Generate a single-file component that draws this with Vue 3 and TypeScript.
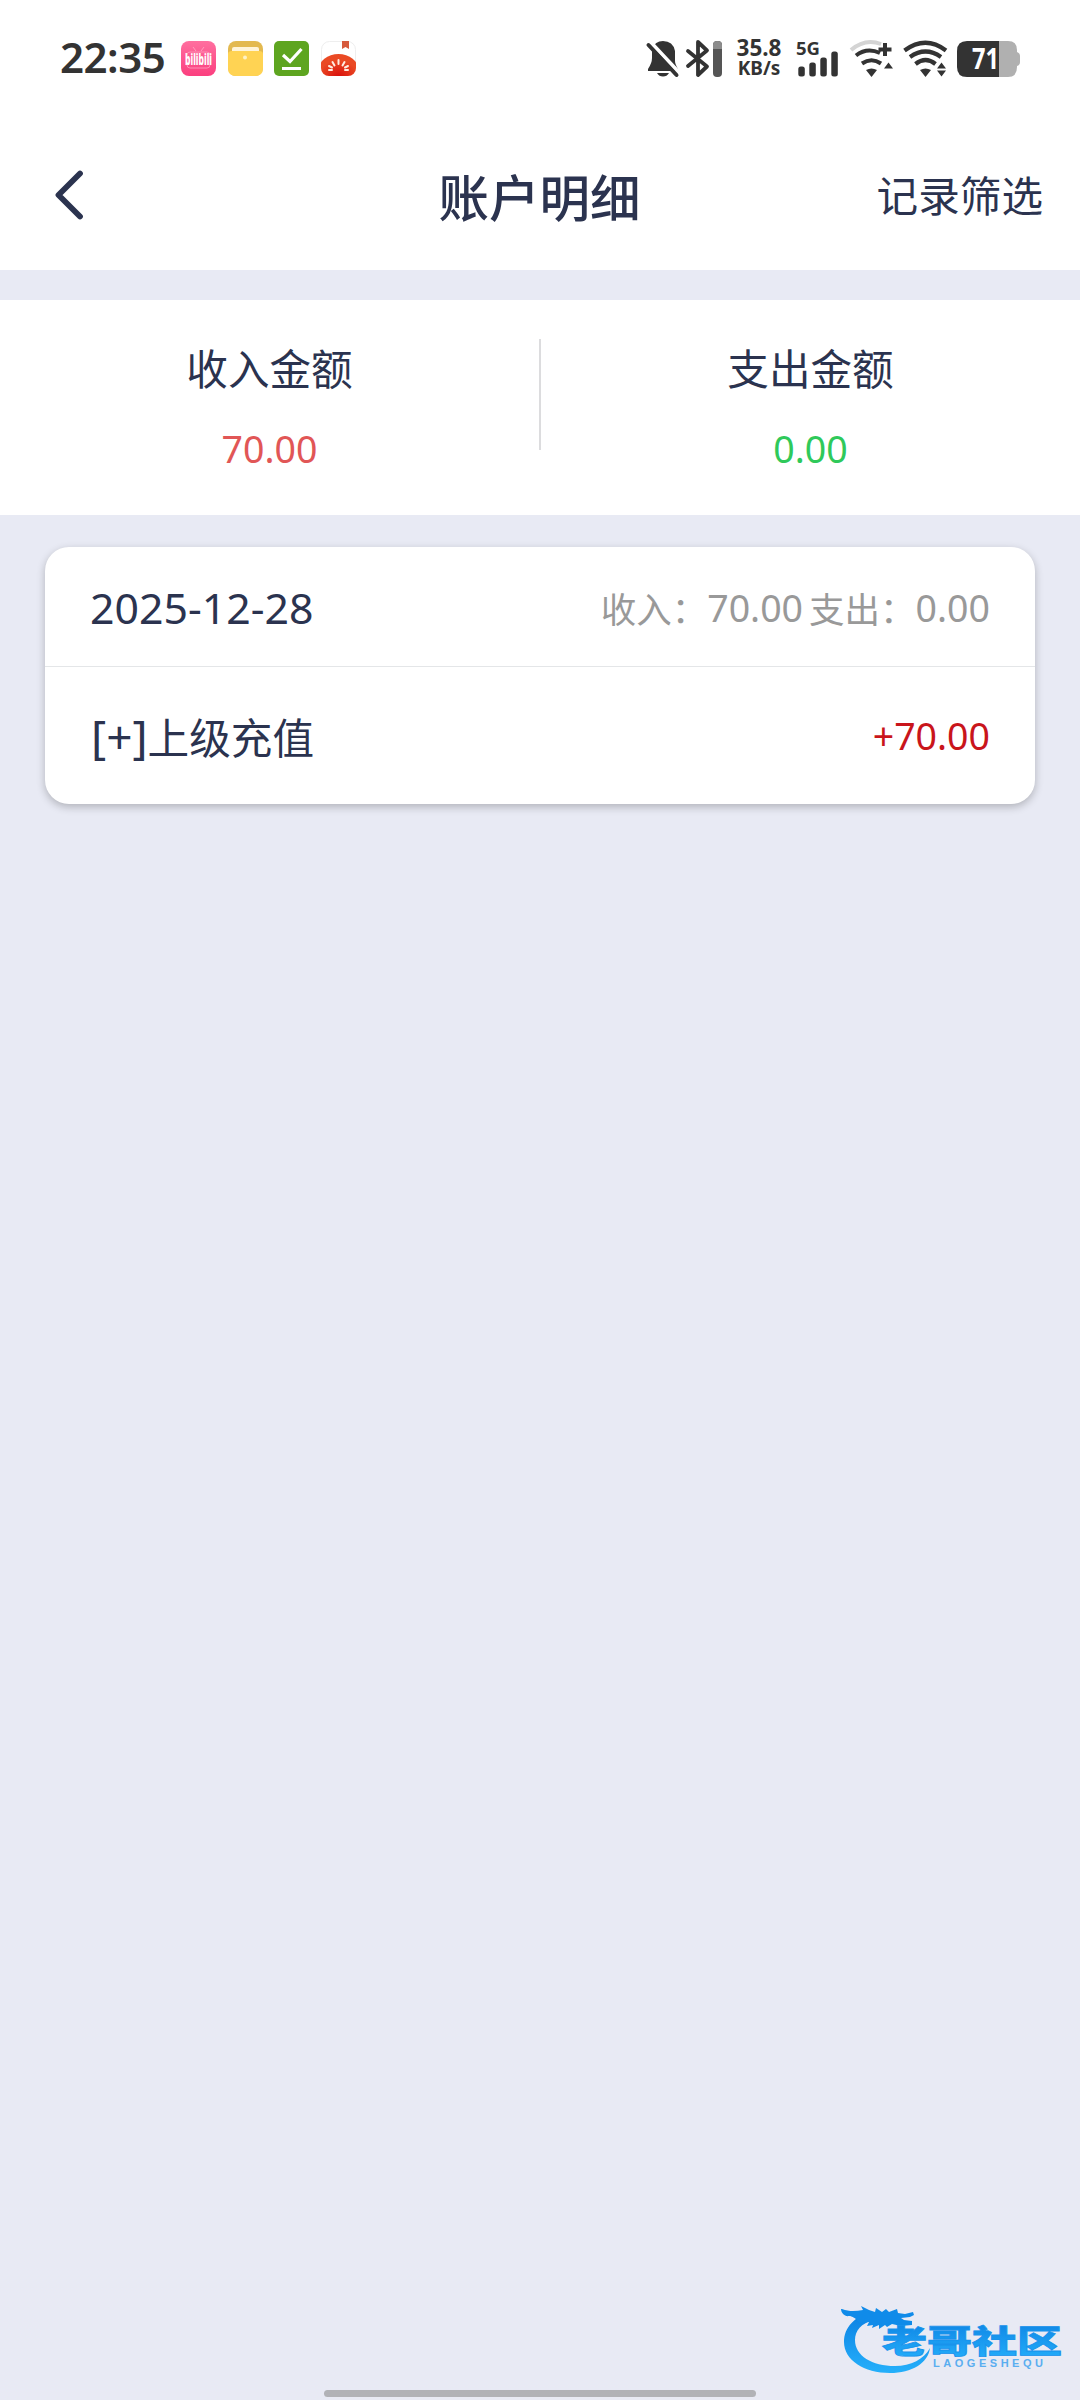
<template>
  <div class="page">
    <div class="status-bar">
      <span class="time">22:35</span>
      <div class="app-icons">
        <svg class="app-icon" viewBox="0 0 35 35">
          <defs>
            <linearGradient id="pink" x1="0" y1="0" x2="0" y2="1">
              <stop offset="0" stop-color="#ff6f9f" />
              <stop offset="1" stop-color="#fb3f7f" />
            </linearGradient>
          </defs>
          <rect width="35" height="35" rx="8" fill="url(#pink)" />
          <rect x="6" y="11" width="23" height="16" rx="3" fill="none" stroke="#ff8fb4" />
          <path d="M12 6l3 4M23 6l-3 4" stroke="#ff9dbd" fill="none" />
          <text x="4" y="23.500" class="bili" textLength="27" lengthAdjust="spacingAndGlyphs">bilibili</text>
        </svg>
        <svg class="app-icon" viewBox="0 0 35 35">
          <rect width="35" height="35" rx="8" fill="#e3b94f" />
          <path d="M4 10V8q0-2 2-2h23q2 0 2 2v2z" fill="#fff4d8" />
          <path d="M0 13q0-3 4-3h27q4 0 4 3v14q0 8-8 8H8q-8 0-8-8z" fill="#ffd353" />
          <circle cx="17" cy="16.500" r="2" fill="#fff2c4" />
        </svg>
        <svg class="app-icon" viewBox="0 0 35 35">
          <rect width="35" height="35" rx="5" fill="#5ea520" />
          <path d="M9 14l7 6.500L27.500 8" fill="none" stroke="#fff" stroke-width="3.200" />
          <path d="M8 27.500h19" stroke="#fff" stroke-width="3" />
        </svg>
        <svg class="app-icon" viewBox="0 0 35 35">
          <defs>
            <clipPath id="tomato"><rect width="35" height="35" rx="8" /></clipPath>
            <radialGradient id="red" cx=".5" cy=".7" r=".5">
              <stop offset="0" stop-color="#d90f0b" />
              <stop offset="1" stop-color="#ea4a24" />
            </radialGradient>
          </defs>
          <rect x=".5" y=".5" width="34" height="34" rx="8" fill="#fff" stroke="#eee" />
          <path d="M21 0h7v8l-3.500-2-3.500 2z" fill="#d65a3c" />
          <g clip-path="url(#tomato)">
            <ellipse cx="17.500" cy="29" rx="20" ry="16" fill="url(#red)" />
          </g>
          <path
            d="M17.500 19v4M11.500 21l2 3.500M23.500 21l-2 3.500M8 25l3 1.500M27 25l-3 1.500M8 29h3M24 29h3"
            stroke="#ffece0"
            stroke-width="2"
            stroke-linecap="round"
          />
        </svg>
      </div>

      <div class="indicators">
        <!-- 静音 -->
        <svg class="bell" width="32" height="37" viewBox="0 0 32 37">
          <path d="M5 9Q8 1 16 1q10 0 12 10v10q0 3 3 8v2H1v-2q4-6 4-11z" fill="#333" />
          <path d="M10 33h12q-2 3.500-6 3.500T10 33z" fill="#333" />
          <path d="M3 1.500l29 31" stroke="#fff" stroke-width="4" />
          <path d="M1.500 5l28 30" stroke="#333" stroke-width="4" stroke-linecap="round" />
        </svg>
        <!-- 蓝牙 -->
        <svg class="bluetooth" width="36" height="37" viewBox="0 0 36 37">
          <path
            d="M2 11l19 15.500-9 8.500V2l9 8.500L2 26"
            fill="none"
            stroke="#333"
            stroke-width="3.800"
            stroke-linecap="round"
            stroke-linejoin="round"
          />
          <rect x="27" y="1" width="9" height="36" rx="4" fill="#555" />
          <path d="M27 9V5q0-4 4.500-4T36 5v4z" fill="#8c8c8c" />
        </svg>
        <div class="net-speed">
          <span class="speed-value">35.8</span>
          <span class="speed-unit">KB/s</span>
        </div>
        <svg class="signal" width="42" height="37" viewBox="0 0 42 37">
          <text x="0" y="15" class="signal-text" textLength="24" lengthAdjust="spacingAndGlyphs">5G</text>
          <rect
            v-for="(h, i) in signalBars"
            :key="i"
            :x="2.3 + i * 11"
            :y="36.5 - h"
            width="6.500"
            :height="h"
            rx="2.500"
            fill="#333"
          />
        </svg>
        <svg class="wifi-plus" width="43" height="37" viewBox="0 0 43 37">
          <g fill="none" stroke-width="4">
            <path d="M1 10Q15 -2 31 4" stroke="#d4d4d4" />
            <path d="M6 15.500Q17 7 30 13" stroke="#333" />
            <path d="M12 23.500Q21.500 17 31 23.500" stroke="#333" />
          </g>
          <path d="M16 30q5.500-3 11 0l-5.500 7z" fill="#333" />
          <path d="M35 3v13M28.500 9.500h13" stroke="#333" stroke-width="4" />
          <path d="M34 28.500l4.500-6 4.500 6z" fill="#333" />
        </svg>
        <svg class="wifi" width="45" height="37" viewBox="0 0 45 37">
          <g fill="none" stroke="#333" stroke-width="4.200">
            <path d="M1.500 10.500Q22.500 -5 43 10.500" />
            <path d="M7 17Q22.500 6 38 17" />
            <path d="M12.500 24Q22.500 16 32.500 24" />
          </g>
          <path d="M17 30q5.500-3 11 0l-5.500 7zM34 28.500l4.500-6 4.500 6zM34 30.500l4.500 6 4.500-6z" fill="#333" />
        </svg>
        <svg class="battery" width="63" height="37" viewBox="0 0 63 37">
          <path d="M41 1h10q9 0 9 9v2q3 1 3 4v6q0 3-3 4v1q0 10-9 10H41z" fill="#b0b0b0" />
          <path d="M42 1H10Q0 1 0 11v16q0 10 10 10h32z" fill="#333" />
          <text x="15" y="28.500" class="battery-text" textLength="27" lengthAdjust="spacingAndGlyphs">71</text>
        </svg>
      </div>
    </div>

    <header class="nav-bar">
      <div class="back">
        <svg width="30" height="50" viewBox="0 0 30 50">
          <path
            d="M26 3.500L4.500 25L26 46.500"
            fill="none"
            stroke="#2b334f"
            stroke-width="5.800"
            stroke-linecap="round"
            stroke-linejoin="round"
          />
        </svg>
      </div>
      <h1 class="title">账户明细</h1>
      <span class="filter">记录筛选</span>
    </header>

    <section class="summary">
      <div class="summary-item">
        <div class="label">收入金额</div>
        <div class="amount income">{{ income }}</div>
      </div>
      <div class="divider"></div>
      <div class="summary-item">
        <div class="label">支出金额</div>
        <div class="amount expense">{{ expense }}</div>
      </div>
    </section>

    <main class="content">
      <div v-for="day in days" :key="day.date" class="card">
        <div class="card-header">
          <span class="date">{{ day.date }}</span>
          <span class="day-total">
            <span>收入：</span><span class="num">{{ day.income }}</span>
            <span class="second">支出：</span><span class="num">{{ day.expense }}</span>
          </span>
        </div>
        <div v-for="item in day.records" :key="item.name" class="record">
          <span class="record-name"><span class="sign">[+]</span>{{ item.name }}</span>
          <span class="record-amount">{{ item.amount }}</span>
        </div>
      </div>
    </main>

    <svg class="watermark" width="230" height="80" viewBox="0 0 230 80">
      <defs>
        <linearGradient id="blue" x1="0" y1="0" x2="0" y2="1">
          <stop offset="0" stop-color="#0c80e2" />
          <stop offset="1" stop-color="#25b0fb" />
        </linearGradient>
      </defs>
      <path
        d="M34 11C13 14 3 27 3 41c0 18 20 31 46 31 22 0 38-10 40-25-6 11-19 18-35 18-23 0-40-10-40-26 0-9 6-17 19-20z"
        fill="url(#blue)"
      />
      <path
        d="M1 8c8 3 14 2 21 1l-2-4 8 4 6 2 1-4 6 4 4-3 3 3 8-3 1 4 7 1 8-2 1 3-4 2-9 1 3 2 8 1v4l-11 1-9-2-5 3-2-2-6 4v-4l-7 3 1-3-6 1 2-4-10 1c-3-5-7-7-10-7-4 1-8-3-8-7z"
        fill="#108be9"
      />
      <text x="41" y="52" class="mark-name" textLength="180" lengthAdjust="spacingAndGlyphs">老哥社区</text>
      <text x="92" y="65.500" class="mark-sub" textLength="110">LAOGESHEQU</text>
    </svg>
    <div class="home-indicator"></div>
  </div>
</template>

<script setup lang="ts">
interface RecordItem {
  name: string
  amount: string
}

interface DayGroup {
  date: string
  income: string
  expense: string
  records: RecordItem[]
}

const income = '70.00'
const expense = '0.00'
const signalBars = [10, 14, 19, 25]

const days: DayGroup[] = [
  {
    date: '2025-12-28',
    income: '70.00',
    expense: '0.00',
    records: [{ name: '上级充值', amount: '+70.00' }]
  }
]
</script>

<style>
body {
  margin: 0;
  background: #e8eaf4;
}
</style>

<style scoped>
.page {
  position: relative;
  width: 1080px;
  height: 2400px;
  overflow: hidden;
  background: #e8eaf4;
  color: #2b334f;
  font-family: 'Noto Sans', 'Noto Sans CJK SC', sans-serif;
}

svg {
  display: block;
  flex-shrink: 0;
  overflow: visible;
}

/* 状态栏 */
.status-bar {
  display: flex;
  align-items: center;
  height: 117px;
  box-sizing: border-box;
  padding: 0 60px;
  background: #fff;
  color: #333;
}

.time {
  width: 121px;
  padding-bottom: 3px;
  font-size: 42px;
  font-weight: 600;
  letter-spacing: -0.5px;
  line-height: 60px;
}

.app-icons {
  display: flex;
  gap: 11.6px;
}

.app-icon {
  width: 35px;
  height: 35px;
}

.bili {
  font-size: 16px;
  font-weight: 800;
  fill: #fff;
}

.indicators {
  display: flex;
  align-items: center;
  margin-left: auto;
}

.bluetooth {
  margin-left: 7px;
}

.net-speed {
  display: flex;
  flex-direction: column;
  align-items: center;
  width: 48px;
  margin-left: 13px;
  padding-bottom: 2px;
  font-weight: 700;
}

.speed-value {
  font-size: 22.5px;
  line-height: 20px;
}

.speed-unit {
  font-size: 19px;
  line-height: 20px;
}

.signal {
  margin-left: 13px;
}

.signal-text {
  font-size: 18.5px;
  font-weight: 700;
  fill: #333;
}

.wifi-plus {
  margin-left: 12px;
}

.wifi {
  margin-left: 10px;
}

.battery {
  margin-left: 9px;
}

.battery-text {
  font-size: 28px;
  font-weight: 700;
  fill: #fff;
}

/* 导航栏 */
.nav-bar {
  display: grid;
  grid-template-columns: 1fr auto 1fr;
  align-items: center;
  height: 153px;
  box-sizing: border-box;
  padding: 0 37px 0 54px;
  background: #fff;
}

.back {
  padding-top: 2px;
}

.title {
  margin: 0;
  padding-top: 8px;
  font-size: 50.5px;
  font-weight: 500;
  line-height: 70px;
  transform: translateX(-9px);
}

.filter {
  justify-self: end;
  padding-top: 4px;
  font-size: 41.6px;
  line-height: 60px;
}

/* 收支汇总 */
.summary {
  display: flex;
  height: 215px;
  margin-top: 30px;
  background: #fff;
}

.summary-item {
  flex: 1;
  text-align: center;
}

.label {
  margin-top: 39px;
  font-size: 41.6px;
  line-height: 60px;
}

.amount {
  margin-top: 20px;
  font-size: 37.5px;
  line-height: 60px;
}

.income {
  color: #e15656;
}

.expense {
  color: #2fc95a;
}

.divider {
  width: 2px;
  height: 111px;
  margin-top: 39px;
  background: #dcdcde;
}

/* 明细卡片 */
.content {
  padding: 32px 45px;
}

.card {
  border-radius: 24px;
  background: #fff;
  box-shadow: 0 3px 8px rgba(0, 0, 0, 0.24);
}

.card-header,
.record {
  display: flex;
  align-items: center;
  justify-content: space-between;
  box-sizing: border-box;
  padding: 0 45px;
}

.card-header {
  height: 120px;
  padding-top: 2px;
  border-bottom: 1px solid #e4e6e8;
}

.date {
  font-size: 42.8px;
}

.day-total {
  display: flex;
  align-items: center;
  font-size: 35.5px;
  color: #999;
}

.day-total .num {
  font-size: 37.5px;
}

.second {
  margin-left: 6px;
}

.record {
  height: 137px;
  font-size: 41.6px;
}

.sign {
  margin-left: 1px;
  font-size: 46px;
}

.record-amount {
  font-size: 37.5px;
  color: #c9151b;
}

/* 右下角水印 */
.watermark {
  position: absolute;
  left: 841px;
  top: 2301px;
}

.mark-name {
  font-family: 'Noto Sans CJK SC', sans-serif;
  font-size: 32px;
  font-weight: 900;
  fill: url(#blue);
  stroke: #1893ec;
  stroke-width: 0.8px;
}

.mark-sub {
  font-family: 'Liberation Sans', sans-serif;
  font-size: 11px;
  font-weight: 700;
  fill: #5aaef0;
}

.home-indicator {
  position: absolute;
  left: 324px;
  top: 2390px;
  width: 432px;
  height: 7px;
  border-radius: 4px;
  background: #b1b2b6;
}
</style>
